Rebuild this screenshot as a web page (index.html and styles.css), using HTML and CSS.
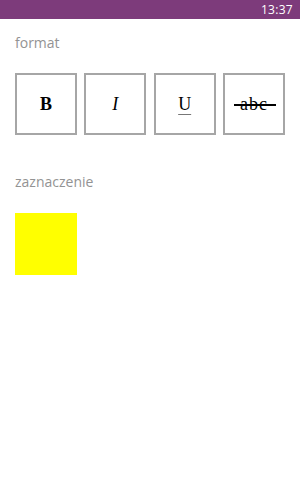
FILE: index.html
```html
<!DOCTYPE html>
<html lang="pl">
<head>
  <meta charset="UTF-8">
  <title>format</title>
  <link rel="stylesheet" href="styles.css">
</head>
<body>
  <div class="statusbar"><span class="clock">13:37</span></div>
  <div class="page">
    <div class="label">format</div>
    <div class="formats">
      <button class="fmt bold">B</button>
      <button class="fmt italic">I</button>
      <button class="fmt under">U</button>
      <button class="fmt strike"><span>abc</span></button>
    </div>
    <div class="label second">zaznaczenie</div>
    <div class="swatch"></div>
  </div>
</body>
</html>
```

FILE: styles.css
```css
body{
  margin: 0;
  background: #fff;
  font-family: "Open Sans", "Noto Sans", sans-serif;
}
.statusbar{
  height: 19px;
  background: #7d3b7b;
  color: #fff;
  display: flex;
  justify-content: flex-end;
  align-items: center;
  padding: 0 7px;
}
.clock{
  font-size: 12px;
  line-height: 19px;
  letter-spacing: 0.3px;
}
.page{
  padding: 0 15px;
}
.label{
  margin-top: 14px;
  font-size: 14px;
  line-height: 20px;
  color: #939393;
}
.label.second{
  margin-top: 37px;
}
.formats{
  margin-top: 20px;
  width: 270px;
  display: flex;
  justify-content: space-between;
}
.fmt{
  width: 62px;
  height: 62px;
  padding: 0;
  margin: 0;
  border: 2px solid #a6a6a6;
  border-radius: 0;
  background: #fff;
  color: #000;
  font-family: "Liberation Serif", "Times New Roman", serif;
  font-size: 18px;
}
.bold{
  font-weight: bold;
}
.italic{
  font-style: italic;
}
.under{
  text-decoration: underline;
  text-decoration-color: #777;
  text-decoration-thickness: 1px;
  text-underline-offset: 4px;
}
.strike span{
  position: relative;
  letter-spacing: 1px;
}
.strike span::after{
  content: "";
  position: absolute;
  left: -6px;
  right: -8px;
  top: 50%;
  height: 2px;
  background: #000;
}
.swatch{
  margin-top: 21px;
  width: 62px;
  height: 62px;
  background: #ffff00;
}
```
